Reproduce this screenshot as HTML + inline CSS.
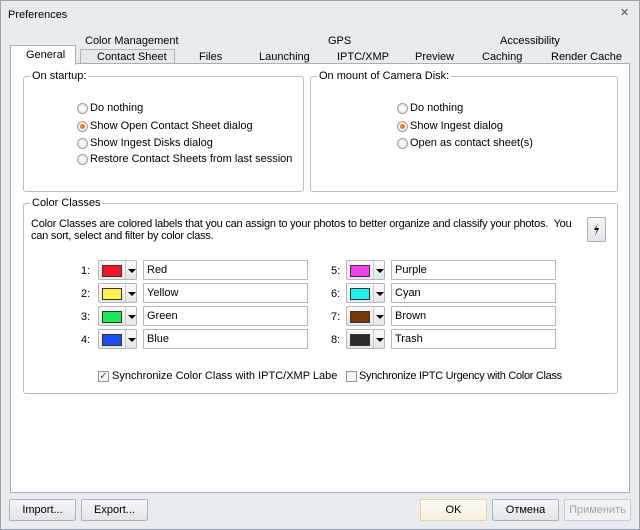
<!DOCTYPE html>
<html><head><meta charset="utf-8"><style>
*{box-sizing:border-box;margin:0;padding:0}
body{width:640px;height:530px;background:#eef0f3;font-family:"Liberation Sans","DejaVu Sans",sans-serif;font-size:11px;color:#000;position:relative;overflow:hidden}
.a{position:absolute;white-space:nowrap}
.t{position:absolute;white-space:nowrap;margin-top:2px}
.win{position:absolute;left:0;top:0;width:640px;height:530px;border:1px solid #9aa3ad;background:#e9ecef}
.page{position:absolute;left:10px;top:63px;width:620px;height:430px;background:#fff;border:1px solid #a8afb7}
.grp{position:absolute;border:1px solid #b8bec5;border-radius:3px}
.lg{position:absolute;top:-7px;left:6px;background:#fff;padding:0 2px}
.rad{position:absolute;width:11px;height:11px;border-radius:50%;border:1px solid #9aa0a6;background:radial-gradient(circle,#fff,#dde0e3)}
.rad.on::after{content:"";position:absolute;left:2px;top:2px;width:5px;height:5px;border-radius:50%;background:#e8821e}
.cb{position:absolute;height:20px;border:1px solid #b3b8be;background:linear-gradient(#fafafa,#e4e6e9);border-radius:2px;width:39px}
.sw{position:absolute;left:3px;top:4px;width:20px;height:12px;border:1px solid #333}
.dd{position:absolute;left:26px;top:0;width:12px;height:18px;border-left:1px solid #c5c9ce}
.dd::after{content:"";position:absolute;left:2px;top:8px;border-left:4px solid transparent;border-right:4px solid transparent;border-top:4px solid #000}
.fld{position:absolute;width:165px;height:20px;border:1px solid #b5bac0;background:#fff;padding:3px 3px}
.btn{position:absolute;width:67px;height:22px;border:1px solid #adb2b8;border-radius:2px;background:linear-gradient(#f6f6f6,#e2e4e7);text-align:center;line-height:21px}
.chk{position:absolute;width:11px;height:11px;border:1px solid #8e959c;background:#f4f4f4;font-size:10px;line-height:9px;text-align:center;color:#555}
</style></head><body>
<div class="win"></div>
<div class="t" style="left:8px;top:7px">Preferences</div>
<div class="a" style="left:620px;top:6px;color:#555;font-size:11px">✕</div>
<div class="t" style="left:85px;top:33px">Color Management</div>
<div class="t" style="left:328px;top:33px">GPS</div>
<div class="t" style="left:500px;top:33px">Accessibility</div>
<div class="a" style="left:80px;top:49px;width:95px;height:15px;border:1px solid #b0b6bc;border-bottom:none;background:#e6e9ec"></div>
<div class="t" style="left:97px;top:49px">Contact Sheet</div>
<div class="t" style="left:199px;top:49px">Files</div>
<div class="t" style="left:259px;top:49px">Launching</div>
<div class="t" style="left:337px;top:49px">IPTC/XMP</div>
<div class="t" style="left:415px;top:49px">Preview</div>
<div class="t" style="left:482px;top:49px">Caching</div>
<div class="t" style="left:551px;top:49px">Render Cache</div>
<div class="page"></div>
<div class="a" style="left:10px;top:45px;width:66px;height:20px;border:1px solid #a8afb7;border-bottom:none;background:#fff"></div>
<div class="t" style="left:26px;top:47px">General</div>

<div class="grp" style="left:23px;top:76px;width:281px;height:116px"><span class="lg">On startup:</span></div>
<div class="rad" style="left:77px;top:103px"></div><div class="t" style="left:90px;top:100px">Do nothing</div>
<div class="rad on" style="left:77px;top:121px"></div><div class="t" style="left:90px;top:118px">Show Open Contact Sheet dialog</div>
<div class="rad" style="left:77px;top:138px"></div><div class="t" style="left:90px;top:135px">Show Ingest Disks dialog</div>
<div class="rad" style="left:77px;top:154px"></div><div class="t" style="left:90px;top:151px">Restore Contact Sheets from last session</div>

<div class="grp" style="left:310px;top:76px;width:308px;height:116px"><span class="lg">On mount of Camera Disk:</span></div>
<div class="rad" style="left:397px;top:103px"></div><div class="t" style="left:410px;top:100px">Do nothing</div>
<div class="rad on" style="left:397px;top:121px"></div><div class="t" style="left:410px;top:118px">Show Ingest dialog</div>
<div class="rad" style="left:397px;top:138px"></div><div class="t" style="left:410px;top:135px">Open as contact sheet(s)</div>

<div class="grp" style="left:23px;top:203px;width:595px;height:191px"><span class="lg">Color Classes</span></div>
<div class="t" style="left:31px;top:216px;line-height:12px;letter-spacing:-0.22px">Color Classes are colored labels that you can assign to your photos to better organize and classify your photos.&nbsp; You<br>can sort, select and filter by color class.</div>
<div class="btn" style="left:587px;top:217px;width:19px;height:25px"><svg width="17" height="23" viewBox="0 0 17 23"><path d="M10 5 L6 12 L9 12 L7 18 L11 10 L8 10 L10 5Z" fill="#000"/></svg></div>

<div class="t" style="left:81px;top:263px">1:</div><div class="cb" style="left:98px;top:260px"><div class="sw" style="background:#f2182a"></div><div class="dd"></div></div><div class="fld" style="left:143px;top:260px">Red</div>
<div class="t" style="left:81px;top:286px">2:</div><div class="cb" style="left:98px;top:283px"><div class="sw" style="background:#fff04a"></div><div class="dd"></div></div><div class="fld" style="left:143px;top:283px">Yellow</div>
<div class="t" style="left:81px;top:309px">3:</div><div class="cb" style="left:98px;top:306px"><div class="sw" style="background:#1ee65a"></div><div class="dd"></div></div><div class="fld" style="left:143px;top:306px">Green</div>
<div class="t" style="left:81px;top:332px">4:</div><div class="cb" style="left:98px;top:329px"><div class="sw" style="background:#1e4ef2"></div><div class="dd"></div></div><div class="fld" style="left:143px;top:329px">Blue</div>

<div class="t" style="left:331px;top:263px">5:</div><div class="cb" style="left:346px;top:260px"><div class="sw" style="background:#f040f0"></div><div class="dd"></div></div><div class="fld" style="left:391px;top:260px">Purple</div>
<div class="t" style="left:331px;top:286px">6:</div><div class="cb" style="left:346px;top:283px"><div class="sw" style="background:#20f0f0"></div><div class="dd"></div></div><div class="fld" style="left:391px;top:283px">Cyan</div>
<div class="t" style="left:331px;top:309px">7:</div><div class="cb" style="left:346px;top:306px"><div class="sw" style="background:#7a3a08"></div><div class="dd"></div></div><div class="fld" style="left:391px;top:306px">Brown</div>
<div class="t" style="left:331px;top:332px">8:</div><div class="cb" style="left:346px;top:329px"><div class="sw" style="background:#2a2a2a"></div><div class="dd"></div></div><div class="fld" style="left:391px;top:329px">Trash</div>

<div class="chk" style="left:98px;top:371px">✓</div><div class="t" style="left:112px;top:368px">Synchronize Color Class with IPTC/XMP Labe</div>
<div class="chk" style="left:346px;top:371px"></div><div class="t" style="left:359px;top:368px;letter-spacing:-0.3px">Synchronize IPTC Urgency with Color Class</div>

<div class="btn" style="left:9px;top:499px">Import...</div>
<div class="btn" style="left:81px;top:499px">Export...</div>
<div class="btn" style="left:420px;top:499px;border-color:#e8d590;background:linear-gradient(#fdfcf4,#f3f0e0)">OK</div>
<div class="btn" style="left:492px;top:499px">Отмена</div>
<div class="btn" style="left:564px;top:499px;color:#a0a4a8;background:#f0f1f3;border-color:#c8ccd0">Применить</div>
</body></html>
